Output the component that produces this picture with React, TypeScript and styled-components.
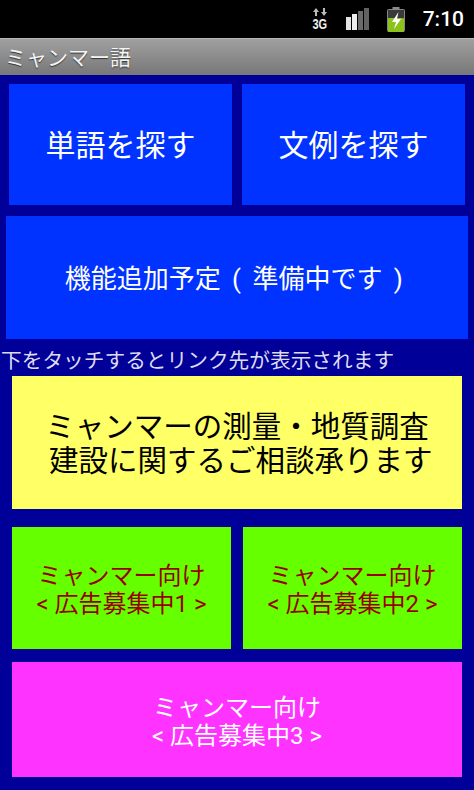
import React from 'react'
import styled, { createGlobalStyle } from 'styled-components'

const GlobalStyle = createGlobalStyle`
  html, body {
    margin: 0;
    padding: 0;
    background: #000099;
  }
`

const Screen = styled.div`
  width: 474px;
  height: 790px;
  overflow: hidden;
  display: flex;
  flex-direction: column;
  background: #000099;
  font-family: "Roboto", "Noto Sans CJK JP", sans-serif;
`

const StatusBar = styled.div`
  height: 38px;
  flex: none;
  display: flex;
  align-items: center;
  justify-content: flex-end;
  background: #000;
`

const StatusIcon = styled.svg<{ $gap: number }>`
  display: block;
  flex: none;
  margin-right: ${p => p.$gap}px;
`

const Clock = styled.span`
  margin-right: 10px;
  color: #fff;
  font: 500 21px "Roboto", sans-serif;
`

const TitleBar = styled.div`
  height: 37px;
  flex: none;
  box-sizing: border-box;
  padding: 0 0 3px 5px;
  display: flex;
  align-items: center;
  border-top: 1px solid #b5b5b5;
  background: linear-gradient(#a0a0a0, #777);
  color: #f4f4f4;
  font-size: 21px;
  text-shadow: 0 1px 1px #333;
`

const Content = styled.div`
  flex: 1;
  display: flex;
  flex-direction: column;
`

const Row = styled.div<{ $top: number; $side: number; $gap?: number; $height: number }>`
  display: flex;
  gap: ${p => p.$gap ?? 0}px;
  height: ${p => p.$height}px;
  margin-top: ${p => p.$top}px;
  padding: 0 ${p => p.$side}px;
`

const Tile = styled.div<{ $bg: string; $fg: string; $size: number; $lead?: number; $nudge?: number }>`
  flex: 1;
  box-sizing: border-box;
  padding-top: ${p => p.$nudge ?? 0}px;
  display: flex;
  align-items: center;
  justify-content: center;
  text-align: center;
  background: ${p => p.$bg};
  color: ${p => p.$fg};
  font-size: ${p => p.$size}px;
  line-height: ${p => p.$lead ?? p.$size + 4}px;
  white-space: pre-line;
`

const WideTile = styled(Tile)`
  padding-left: 5px;
  word-spacing: 5px;
`

const Hint = styled.div`
  height: 22px;
  margin-top: 10px;
  padding-left: 1px;
  color: #dcdcf0;
  font-size: 20.7px;
  line-height: 24px;
  white-space: nowrap;
`

export default function App() {
  return (
    <>
      <GlobalStyle />
      <Screen>
        <StatusBar>
          <StatusIcon $gap={18} width="16" height="28" viewBox="0 -3 16 28">
            <path d="M4 0l3 4H5v4H3V4H1zM12 8L9 4h2V0h2v4h2z" fill="#bbb" />
            <text transform="translate(0.5 21) scale(1 1.4)" fill="#eee" fontFamily="Liberation Sans" fontSize="11" fontWeight="700">3G</text>
          </StatusIcon>
          <StatusIcon $gap={17} width="24" height="22" viewBox="0 0 24 22">
            <rect x="0" y="9" width="5" height="13" fill="#e4e4e4" />
            <rect x="6" y="6" width="5" height="16" fill="#eee" />
            <rect x="12" y="3" width="5" height="19" fill="#6a6a6a" />
            <rect x="18" y="0" width="5" height="22" fill="#626262" />
          </StatusIcon>
          <StatusIcon $gap={18} width="18" height="25" viewBox="0 0 18 25">
            <rect x="5.500" y="0" width="7" height="4" fill="#8a8a8a" />
            <rect x="0.500" y="2.500" width="17" height="22" rx="1" fill="#3a3a3a" stroke="#888" />
            <rect x="1" y="11" width="16" height="14" rx="1" fill="#8cc21c" />
            <path d="M11.500 5L5 15h4l-2 7 7-10h-4z" fill="#fff" />
          </StatusIcon>
          <Clock>7:10</Clock>
        </StatusBar>
        <TitleBar>ミャンマー語</TitleBar>
        <Content>
          <Row $top={9} $side={9} $gap={10} $height={121}>
            <Tile $bg="#0033ff" $fg="#fff" $size={30} $nudge={3}>単語を探す</Tile>
            <Tile $bg="#0033ff" $fg="#fff" $size={30} $nudge={3}>文例を探す</Tile>
          </Row>
          <Row $top={11} $side={6} $height={123}>
            <WideTile $bg="#0033ff" $fg="#fff" $size={26} $nudge={2}>{'機能追加予定 ( 準備中です )\u00a0'}</WideTile>
          </Row>
          <Hint>下をタッチするとリンク先が表示されます</Hint>
          <Row $top={5} $side={12} $height={133}>
            <Tile $bg="#ffff66" $fg="#000" $size={29.500} $lead={34} $nudge={2}>{'ミャンマーの測量・地質調査\n\u00a0建設に関するご相談承ります'}</Tile>
          </Row>
          <Row $top={18} $side={12} $gap={12} $height={122}>
            <Tile $bg="#66ff00" $fg="#990000" $size={24} $lead={28} $nudge={4}>{'ミャンマー向け\n< 広告募集中1 >'}</Tile>
            <Tile $bg="#66ff00" $fg="#990000" $size={24} $lead={28} $nudge={4}>{'ミャンマー向け\n< 広告募集中2 >'}</Tile>
          </Row>
          <Row $top={13} $side={12} $height={115}>
            <Tile $bg="#ff33ff" $fg="#fff" $size={24} $lead={28} $nudge={4}>{'ミャンマー向け\n< 広告募集中3 >'}</Tile>
          </Row>
        </Content>
      </Screen>
    </>
  )
}
